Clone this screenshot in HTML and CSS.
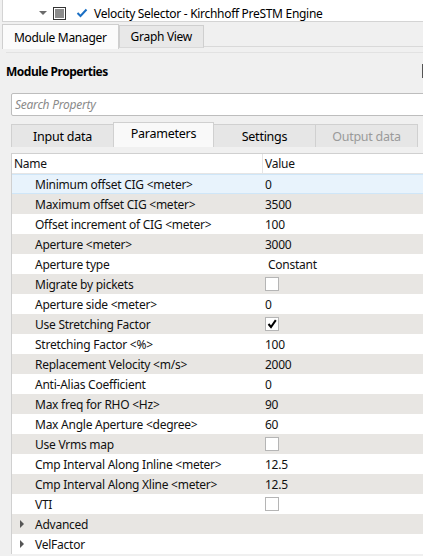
FILE: index.html
```html
<!DOCTYPE html>
<html>
<head>
<meta charset="utf-8">
<link rel="stylesheet" href="styles.css">
</head>
<body>
<div class="tree">
  <div class="tree-rows">
    <div class="tree-row">
      <span class="arrow-space"></span>
      <span class="tbox"></span>
      <span class="tcheck"></span>
      <span class="ttext">Sort traces</span>
    </div>
    <div class="tree-row">
      <span class="arrow-down"></span>
      <span class="tbox partial"><span class="fill"></span></span>
      <svg class="tcheck" width="12" height="10" viewBox="0 0 12 10"><path d="M1.5 5 L4.5 8 L10.5 1.5" fill="none" stroke="#1a6fc4" stroke-width="2"/></svg>
      <span class="ttext">Velocity Selector - Kirchhoff PreSTM Engine</span>
    </div>
  </div>
</div>
<div class="top-tabs">
  <div class="ttab active">Module Manager</div>
  <div class="ttab">Graph View</div>
  <div class="ttab-rest"></div>
</div>
<div class="panel">
  <div class="title-row">
    <span class="title">Module Properties</span>
    <span class="title-icon"></span>
  </div>
  <div class="search"><span class="placeholder">Search Property</span></div>
  <div class="subtabs">
    <div class="stab">Input data</div>
    <div class="stab active">Parameters</div>
    <div class="stab">Settings</div>
    <div class="stab disabled">Output data</div>
  </div>
  <div class="table">
    <div class="hdr">
      <div class="hname">Name</div>
      <div class="hval">Value</div>
    </div>
    <div class="row sel"><div class="n">Minimum offset CIG &lt;meter&gt;</div><div class="v">0</div></div>
    <div class="row alt"><div class="n">Maximum offset CIG &lt;meter&gt;</div><div class="v">3500</div></div>
    <div class="row"><div class="n">Offset increment of CIG &lt;meter&gt;</div><div class="v">100</div></div>
    <div class="row alt"><div class="n">Aperture &lt;meter&gt;</div><div class="v">3000</div></div>
    <div class="row"><div class="n">Aperture type</div><div class="v combo">Constant</div></div>
    <div class="row alt"><div class="n">Migrate by pickets</div><div class="v"><span class="cb"></span></div></div>
    <div class="row"><div class="n">Aperture side &lt;meter&gt;</div><div class="v">0</div></div>
    <div class="row alt"><div class="n">Use Stretching Factor</div><div class="v"><span class="cb"><svg width="12" height="12" viewBox="0 0 12 12"><path d="M2.5 6 L5 9 L9.8 2.2" fill="none" stroke="#000" stroke-width="2"/></svg></span></div></div>
    <div class="row"><div class="n">Stretching Factor &lt;%&gt;</div><div class="v">100</div></div>
    <div class="row alt"><div class="n">Replacement Velocity &lt;m/s&gt;</div><div class="v">2000</div></div>
    <div class="row"><div class="n">Anti-Alias Coefficient</div><div class="v">0</div></div>
    <div class="row alt"><div class="n">Max freq for RHO &lt;Hz&gt;</div><div class="v">90</div></div>
    <div class="row"><div class="n">Max Angle Aperture &lt;degree&gt;</div><div class="v">60</div></div>
    <div class="row alt"><div class="n">Use Vrms map</div><div class="v"><span class="cb"></span></div></div>
    <div class="row"><div class="n">Cmp Interval Along Inline &lt;meter&gt;</div><div class="v">12.5</div></div>
    <div class="row alt"><div class="n">Cmp Interval Along Xline &lt;meter&gt;</div><div class="v">12.5</div></div>
    <div class="row"><div class="n">VTI</div><div class="v"><span class="cb"></span></div></div>
    <div class="row alt"><div class="n group"><span class="arrow-right"></span>Advanced</div><div class="v"></div></div>
    <div class="row"><div class="n group"><span class="arrow-right"></span>VelFactor</div><div class="v"></div></div>
  </div>
</div>
</body>
</html>
```
FILE: styles.css
```css
html, body {
  margin: 0;
  padding: 0;
}
body {
  width: 423px;
  height: 556px;
  overflow: hidden;
  background: #f0f0f0;
  font-family: "Noto Sans", "Open Sans", sans-serif;
  font-size: 12px;
  letter-spacing: -0.25px;
  color: #111;
}
.tree {
  height: 21px;
  margin-left: 2px;
  background: #fff;
  border-bottom: 1px solid #d4d4d4;
  border-left: 1px solid #d4d4d4;
  overflow: hidden;
}
.tree-rows {
  margin-top: -17px;
}
.tree-row {
  height: 20px;
  display: flex;
  align-items: center;
  padding-left: 36px;
}
.arrow-space, .arrow-down {
  width: 8px;
  height: 8px;
  margin-right: 6px;
  position: relative;
}
.arrow-down::after {
  content: "";
  position: absolute;
  left: 0;
  top: 2px;
  border-left: 4px solid transparent;
  border-right: 4px solid transparent;
  border-top: 4px solid #6b6b6b;
}
.tbox {
  width: 11px;
  height: 11px;
  border: 1px solid #333;
  background: #fff;
  display: flex;
  align-items: center;
  justify-content: center;
  margin-right: 10px;
}
.tbox .fill {
  width: 9px;
  height: 9px;
  background: #8c8c8c;
}
.tcheck {
  width: 12px;
  height: 10px;
  margin-right: 6px;
}
.ttext {
  font-size: 12px;
  letter-spacing: -0.3px;
  color: #000;
}
.top-tabs {
  display: flex;
  align-items: flex-start;
  padding-left: 2px;
  margin-top: 2px;
  height: 26px;
}
.ttab {
  height: 21px;
  padding: 0 11px;
  display: flex;
  align-items: center;
  font-size: 12px;
  letter-spacing: -0.3px;
  color: #000;
  background: #e8e8e8;
  border: 1px solid #cfcfcf;
  border-bottom: 1px solid #d9d9d9;
  margin-top: 1px;
}
.ttab.active {
  background: #fbfbfb;
  height: 24px;
  margin-top: 0;
  border-bottom: none;
  padding: 0 11px;
}
.ttab-rest {
  flex: 1;
  height: 22px;
  border-bottom: 1px solid #d9d9d9;
}
.panel {
  padding-left: 11px;
  background: #f0f0f0;
}
.title-row {
  height: 36px;
  padding-bottom: 4px;
  margin-left: -5px;
  margin-right: -6px;
  display: flex;
  align-items: center;
  justify-content: space-between;
  border-top: 1px solid #e2e2e2;
  margin-top: 2px;
}
.title {
  font-weight: bold;
  color: #000;
  font-size: 12px;
  letter-spacing: -0.5px;
}
.title-icon {
  width: 6px;
  height: 12px;
  border: 1px solid #555;
  border-right: none;
}
.search {
  width: 430px;
  background: #fff;
  border: 1px solid #bdbdbd;
  border-radius: 2px;
  display: flex;
  align-items: center;
  padding-left: 3px;
  box-sizing: border-box;
  height: 23px;
}
.placeholder {
  font-style: italic;
  color: #8a8a8a;
}
.subtabs {
  display: flex;
  align-items: flex-end;
  margin-top: 6px;
  height: 25px;
}
.stab {
  width: 101px;
  height: 22px;
  background: #e6e6e6;
  border: 1px solid #d0d0d0;
  border-bottom: none;
  display: flex;
  align-items: center;
  justify-content: center;
  color: #000;
  font-size: 12.5px;
  margin-right: -1px;
}
.stab.active {
  height: 25px;
  background: #f9f9f9;
  position: relative;
  z-index: 1;
  align-items: flex-start;
  padding-top: 2px;
  box-sizing: border-box;
}
.stab.disabled {
  color: #9a9a9a;
}
.table {
  margin-top: 6px;
  width: 430px;
  background: #fff;
  border-left: 1px solid #d0d0d0;
  border-top: 1px solid #d0d0d0;
}
.hdr {
  display: flex;
  height: 19px;
  border-bottom: 1px solid #e5e5e5;
}
.hname {
  width: 248px;
  padding-left: 2px;
  border-right: 1px solid #e5e5e5;
  display: flex;
  align-items: center;
}
.hval {
  padding-left: 2px;
  display: flex;
  align-items: center;
}
.row {
  display: flex;
  height: 20px;
  box-sizing: border-box;
}
.row.alt {
  background: #e8e6e3;
}
.row.sel {
  background: #e8f3fc;
  border-top: 1px solid #cfe6f8;
  border-bottom: 1px solid #cfe6f8;
}
.n {
  width: 227px;
  padding-left: 23px;
  display: flex;
  align-items: center;
  white-space: nowrap;
}
.n.group {
  padding-left: 8px;
  width: 242px;
}
.arrow-right {
  width: 0;
  height: 0;
  border-top: 4px solid transparent;
  border-bottom: 4px solid transparent;
  border-left: 4px solid #555;
  margin-right: 11px;
}
.v {
  padding-left: 3px;
  display: flex;
  align-items: center;
}
.v.combo {
  padding-left: 6px;
}
.cb {
  width: 12px;
  height: 12px;
  background: #fff;
  border: 1px solid #b5b5b5;
  display: flex;
  align-items: center;
  justify-content: center;
}
```
